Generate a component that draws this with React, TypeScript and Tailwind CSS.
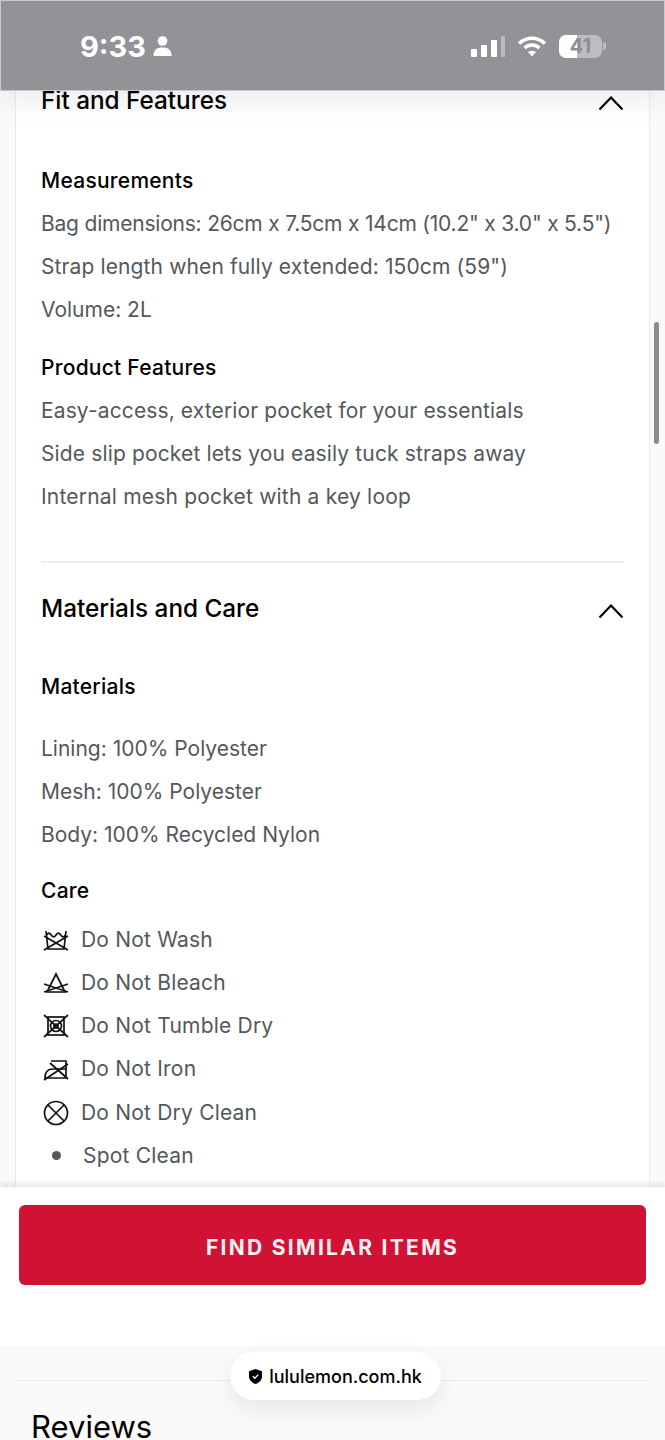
import React from "react";

const Chevron = () => (
  <svg width="26" height="16" viewBox="0 0 26 16" fill="none" stroke="#000" strokeWidth={2.2} className="mt-[3px] shrink-0">
    <path d="M1.5 14.5 13 2.5l11.5 12" />
  </svg>
);

const lines = { fill: "none", stroke: "#111", strokeWidth: 1.7 };

const NoWash = () => (
  <svg width="26" height="24" viewBox="0 0 26 24" {...lines}>
    <path d="M3 3l2 18h16l2-18" />
    <path d="M3.500 7c2-2.500 3-2.500 4.750 0s3 2.500 4.750 0 3-2.500 4.750 0 3 2.500 4.750 0" />
    <path d="M1 22 25 8M1 8l24 14" />
  </svg>
);
const NoBleach = () => (
  <svg width="26" height="24" viewBox="0 0 26 24" {...lines}>
    <path d="M13 3 4 21h18z" />
    <path d="M1 21 25 13M1 13l24 8" />
  </svg>
);
const NoTumble = () => (
  <svg width="26" height="24" viewBox="0 0 26 24" {...lines}>
    <rect x="5" y="3" width="16" height="18" />
    <circle cx="13" cy="12" r="5.500" />
    <circle cx="13" cy="12" r="2" />
    <path d="M1 23 25 1M1 1l24 22" />
  </svg>
);
const NoIron = () => (
  <svg width="26" height="24" viewBox="0 0 26 24" {...lines}>
    <path d="M8 4h15v17H2c0-6 3-9 8-9h13" />
    <path d="M1 23 25 7M7 6l18 16" />
  </svg>
);
const NoDryClean = () => (
  <svg width="26" height="26" viewBox="0 0 26 26" {...lines}>
    <circle cx="13" cy="13" r="11.500" />
    <path d="M5 5l16 16M21 5 5 21" />
  </svg>
);

const Text = ({ children, className = "tracking-[0.12px]" }: { children: React.ReactNode; className?: string }) => (
  <p className={`h-[43px] leading-[43px] text-[21px] text-[#54585b] whitespace-nowrap ${className}`}>{children}</p>
);

const Label = ({ children, className }: { children: React.ReactNode; className: string }) => (
  <h4 className={`h-[30px] leading-[30px] text-[21px] font-medium tracking-[0.25px] text-black ${className}`}>{children}</h4>
);

const Care = ({ icon, label, className = "" }: { icon: React.ReactNode; label: string; className?: string }) => (
  <div className={`flex h-[43px] items-center ${className}`}>
    <div className="flex w-[30px] justify-center">{icon}</div>
    <span className="ml-[10px] text-[21px] tracking-[0.2px] text-[#54585b]">{label}</span>
  </div>
);

export default function App() {
  return (
    <div className="relative flex h-[1440px] w-[665px] flex-col overflow-hidden bg-[#fafafa] font-['Inter',sans-serif]">
      <header className="relative z-10 flex h-[91px] shrink-0 items-center justify-between border border-[#c9c8cc] bg-[#939297] pl-[79px] pr-[58px] pt-[1px] text-white shadow-[0_10px_30px_rgba(0,0,0,0.08)]">
        <div className="flex items-center gap-[7px]">
          <span className="text-[29px] font-bold leading-none">9:33</span>
          <svg width="19" height="20" viewBox="0 0 18 20" fill="#fff">
            <circle cx="9" cy="5" r="4.800" />
            <path d="M0 20c0-6 3-8.500 9-8.500s9 2.500 9 8.500z" />
          </svg>
        </div>
        <div className="flex items-center gap-[12px]">
          <div className="flex items-end gap-[4px]">
            <span className="h-[8px] w-[6px] rounded-[1px] bg-white" />
            <span className="h-[12px] w-[6px] rounded-[1px] bg-white" />
            <span className="h-[17px] w-[6px] rounded-[1px] bg-white" />
            <span className="h-[21px] w-[4px] rounded-[1px] bg-[#bdbdc0]" />
          </div>
          <svg width="30" height="22" viewBox="0 0 30 22" fill="none" stroke="#fff" strokeWidth={3.500}>
            <path d="M2 8.500c7.500-7 18.500-7 26 0" />
            <path d="M7.500 13c4.500-4 10.500-4 15 0" />
            <path d="M15 21.500l-4-4.500c2.500-1.800 5.500-1.800 8 0z" fill="#fff" stroke="none" />
          </svg>
          <div className="flex items-center gap-[1px]">
            <div className="relative h-[23px] w-[43px] overflow-hidden rounded-[7px] bg-[#bdbdc0]">
              <div className="h-full w-[18px] bg-white" />
              <span className="absolute inset-0 text-center text-[20px] font-bold leading-[23px] text-[#8f8e93]">41</span>
            </div>
            <span className="h-[8px] w-[3px] rounded-r-full bg-[#bdbdc0]" />
          </div>
        </div>
      </header>

      <main className="min-h-0 flex-1 overflow-hidden px-[15px]">
        <div className="-mt-[3px] h-[1110px] border-x border-[#ececec] bg-white px-[25px]">
          <div className="flex h-[26px] items-center justify-between">
            <h3 className="-mt-[2px] text-[24.3px] font-medium leading-[26px] text-black">Fit and Features</h3>
            <Chevron />
          </div>
          <Label className="mt-[52px]">Measurements</Label>
          <div className="mt-[6px]">
            <Text className="tracking-[-0.21px]">Bag dimensions: 26cm x 7.5cm x 14cm (10.2" x 3.0" x 5.5")</Text>
            <Text>Strap length when fully extended: 150cm (59")</Text>
            <Text className="tracking-normal">Volume: 2L</Text>
          </div>
          <Label className="mt-[22px]">Product Features</Label>
          <div className="mt-[6px]">
            <Text>Easy-access, exterior pocket for your essentials</Text>
            <Text className="tracking-[0.14px]">Side slip pocket lets you easily tuck straps away</Text>
            <Text className="tracking-[0.2px]">Internal mesh pocket with a key loop</Text>
          </div>
          <div className="mt-[43px] h-[2px] bg-[#eeeeee]" />
          <div className="mt-[33px] flex h-[26px] items-center justify-between">
            <h3 className="-mt-[2px] text-[24.3px] font-medium leading-[26px] text-black">Materials and Care</h3>
            <Chevron />
          </div>
          <Label className="mt-[50px]">Materials</Label>
          <div className="mt-[25px]">
            <Text className="tracking-normal">Lining: 100% Polyester</Text>
            <Text className="tracking-normal">Mesh: 100% Polyester</Text>
            <Text className="tracking-normal">Body: 100% Recycled Nylon</Text>
          </div>
          <Label className="mt-[20px]">Care</Label>
          <div className="mt-[12px]">
            <Care icon={<NoWash />} label="Do Not Wash" />
            <Care icon={<NoBleach />} label="Do Not Bleach" />
            <Care icon={<NoTumble />} label="Do Not Tumble Dry" />
            <Care icon={<NoIron />} label="Do Not Iron" />
            <Care icon={<NoDryClean />} label="Do Not Dry Clean" className="mt-[1px]" />
            <div className="flex h-[43px] items-center">
              <span className="ml-[11px] h-[9px] w-[9px] rounded-full bg-[#54585b]" />
              <span className="ml-[22px] text-[21px] tracking-[0.2px] text-[#54585b]">Spot Clean</span>
            </div>
          </div>
        </div>
      </main>

      <section className="relative z-10 h-[160px] shrink-0 bg-white px-[19px] pt-[18px] shadow-[0_-3px_6px_rgba(0,0,0,0.1)]">
        <button className="h-[80px] w-full rounded-[6px] bg-[#d01334] pt-[5px] text-[21px] font-bold tracking-[2.300px] text-[#fdf1f3]">
          FIND SIMILAR ITEMS
        </button>
      </section>

      <footer className="h-[93px] shrink-0 px-[16px] pt-[33px]">
        <div className="h-[1px] bg-[#ececec]" />
        <h2 className="ml-[15px] mt-[26px] text-[31px] leading-[40px] text-black">Reviews</h2>
      </footer>

      <div className="absolute left-[230px] top-[1352px] z-20 flex h-[48px] w-[211px] items-center justify-center gap-[7px] rounded-full bg-white shadow-[0_10px_24px_rgba(0,0,0,0.08)]">
        <svg width="13" height="15" viewBox="0 0 13 15">
          <path d="M6.500 0 13 2.200v5c0 3.500-2.500 6.300-6.500 7.800C2.500 13.500 0 10.700 0 7.200v-5z" fill="#000" />
          <path d="M3.800 7.200l2 2 3.500-3.600" fill="none" stroke="#fff" strokeWidth={1.300} />
        </svg>
        <span className="text-[18px] font-medium text-black">lululemon.com.hk</span>
      </div>

      <div className="absolute left-[654px] top-[322px] h-[122px] w-[5px] rounded-full bg-[#8c8c8c]" />
    </div>
  );
}
